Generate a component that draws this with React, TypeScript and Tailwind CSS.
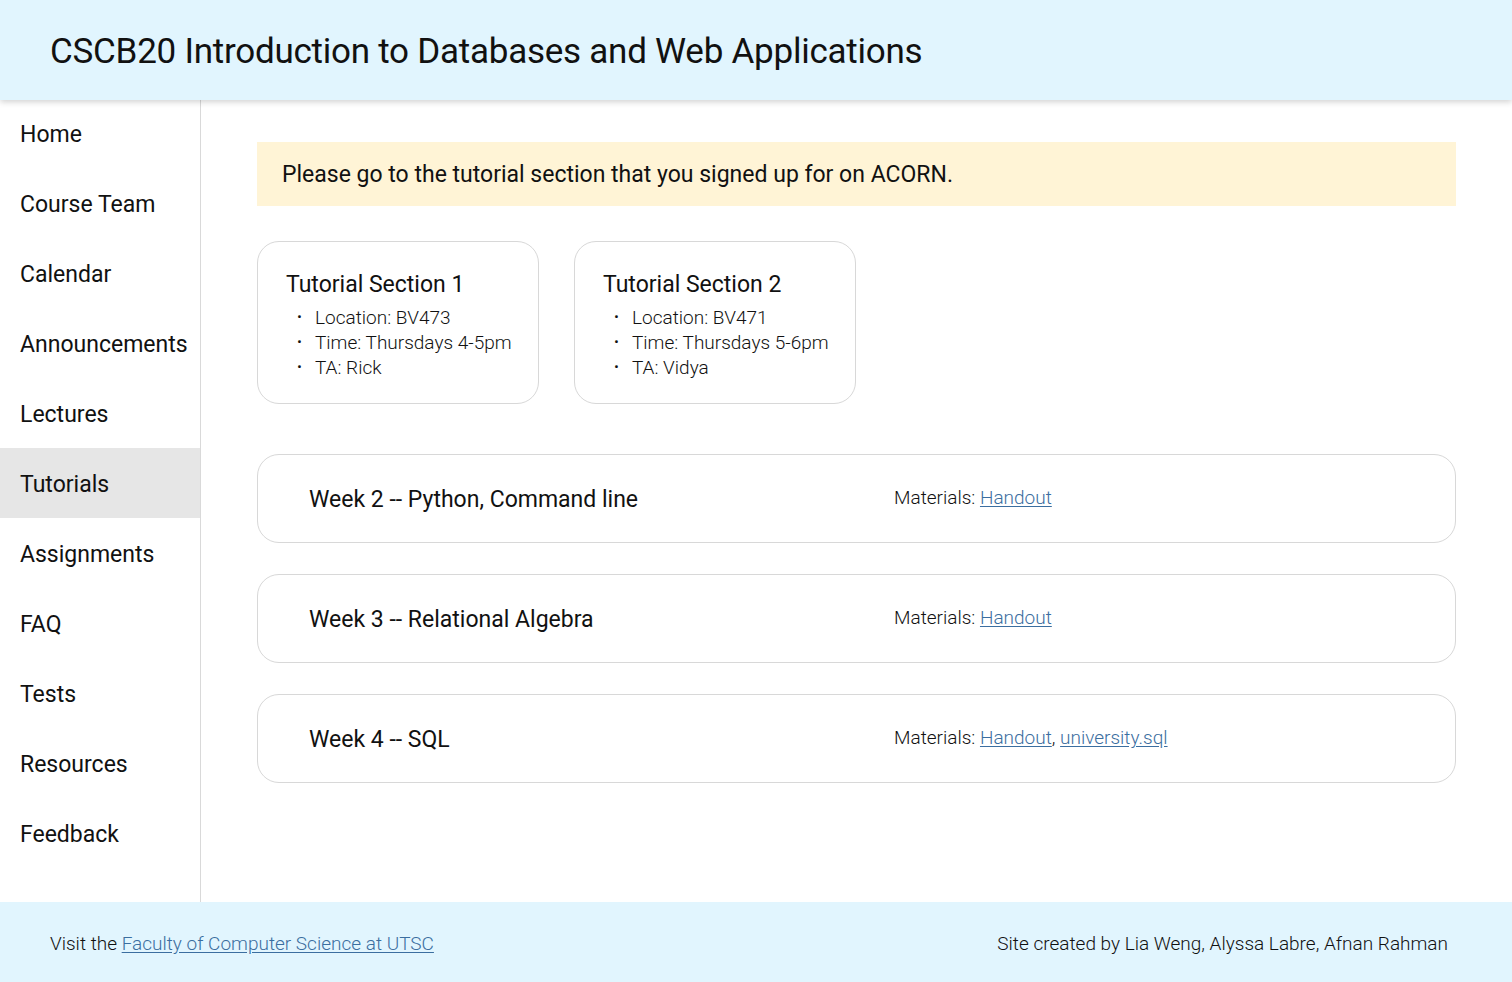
import React from "react";

const nav = [
  "Home",
  "Course Team",
  "Calendar",
  "Announcements",
  "Lectures",
  "Tutorials",
  "Assignments",
  "FAQ",
  "Tests",
  "Resources",
  "Feedback",
];

const sections = [
  { title: "Tutorial Section 1", items: ["Location: BV473", "Time: Thursdays 4-5pm", "TA: Rick"] },
  { title: "Tutorial Section 2", items: ["Location: BV471", "Time: Thursdays 5-6pm", "TA: Vidya"] },
];

const weeks: { title: string; links: string[] }[] = [
  { title: "Week 2 -- Python, Command line", links: ["Handout"] },
  { title: "Week 3 -- Relational Algebra", links: ["Handout"] },
  { title: "Week 4 -- SQL", links: ["Handout", "university.sql"] },
];

export default function App() {
  return (
    <div
      className="min-h-[982px] w-[1512px] bg-white text-[#111] flex flex-col"
      style={{ fontFamily: "Roboto, 'Liberation Sans', sans-serif" }}
    >
      <header className="relative z-10 h-[100px] bg-[#e1f5fe] shadow-[0_2px_6px_rgba(0,0,0,0.18)] flex items-center pl-[50px] pt-[2px]">
        <h1 className="text-[35px] font-normal leading-none tracking-[-0.25px]">
          CSCB20 Introduction to Databases and Web Applications
        </h1>
      </header>
      <div className="flex h-[802px]">
        <nav className="w-[201px] shrink-0 border-r border-[#d9d9d9] -mt-[2px]">
          {nav.map((n) => (
            <div
              key={n}
              className={`h-[70px] flex items-center pl-[20px] pt-[4px] text-[23px] ${n === "Tutorials" ? "bg-[#e6e6e6]" : ""}`}
            >
              {n}
            </div>
          ))}
        </nav>
        <main className="flex-1 pl-[56px] pr-[56px] pt-[42px]">
          <div className="h-[64px] bg-[#fff4d6] flex items-center pl-[25px] pt-[2px] text-[23px]">
            Please go to the tutorial section that you signed up for on ACORN.
          </div>
          <div className="flex gap-[35px] mt-[35px]">
            {sections.map((s) => (
              <div
                key={s.title}
                className="w-[282px] h-[163px] rounded-[22px] border border-[#d8d8d8] pl-[28px] pt-[27px]"
              >
                <div className="text-[23px] leading-[32px]">{s.title}</div>
                <ul className="mt-[4px]">
                  {s.items.map((it) => (
                    <li key={it} className="flex items-center text-[19px] font-light leading-[25px]">
                      <span className="w-[29px] pl-[11px] text-[15px]">•</span>
                      {it}
                    </li>
                  ))}
                </ul>
              </div>
            ))}
          </div>
          <div className="flex flex-col gap-[31px] mt-[50px]">
            {weeks.map((w) => (
              <div
                key={w.title}
                className="h-[89px] rounded-[22px] border border-[#d8d8d8] flex items-center pl-[51px]"
              >
                <div className="w-[585px] text-[23px] pt-[4px]">{w.title}</div>
                <div className="text-[19px] font-light">
                  Materials:{" "}
                  {w.links.map((l, i) => (
                    <React.Fragment key={l}>
                      {i > 0 && ", "}
                      <a href="#" className="text-[#3b6ea0] underline underline-offset-2">
                        {l}
                      </a>
                    </React.Fragment>
                  ))}
                </div>
              </div>
            ))}
          </div>
        </main>
      </div>
      <footer className="h-[80px] bg-[#e1f5fe] flex items-center justify-between pl-[50px] pr-[64px] pt-[4px] text-[19px] font-light">
        <div>
          Visit the{" "}
          <a href="#" className="text-[#3b6ea0] underline underline-offset-2">
            Faculty of Computer Science at UTSC
          </a>
        </div>
        <div>Site created by Lia Weng, Alyssa Labre, Afnan Rahman</div>
      </footer>
    </div>
  );
}
